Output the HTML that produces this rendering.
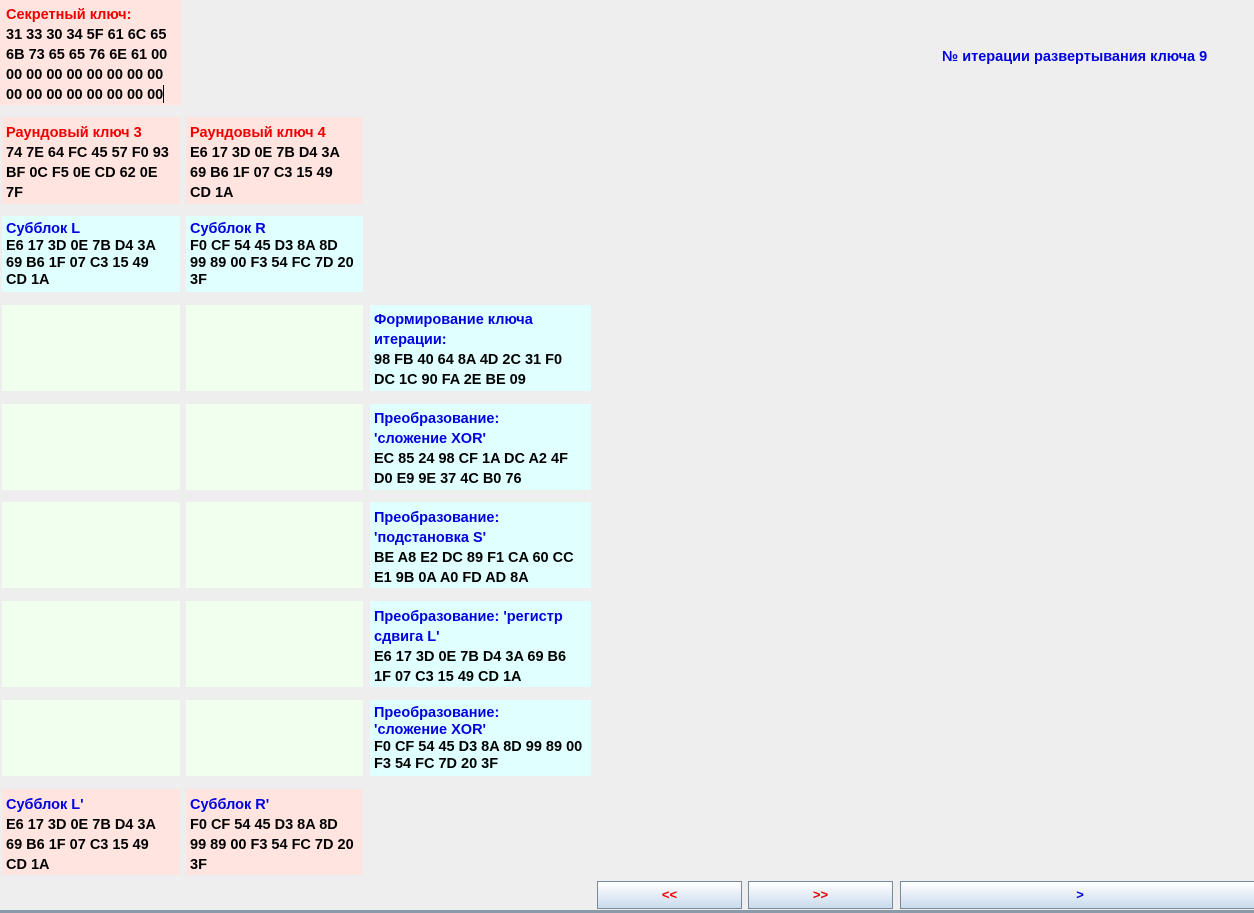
<!DOCTYPE html>
<html><head><meta charset="utf-8"><style>
body{margin:0;width:1254px;height:913px;background:#eeeeee;position:relative;overflow:hidden;font-family:"Liberation Sans",Arial,sans-serif;font-weight:bold;font-size:14.5px;color:#000}
.p{position:absolute;box-sizing:border-box;padding:6px 0 0 5px;white-space:nowrap}
.pk{background:#ffe4e0}.cy{background:#e0ffff}.gr{background:#f0ffee}
.r{color:#f00000}.b{color:#0000e0}
.l20{line-height:20px}.l17{line-height:17px}
.btn{position:absolute;top:881px;height:28px;box-sizing:border-box;border:1px solid #7a8a99;background:linear-gradient(#ffffff,#c9dbed);text-align:center;line-height:26px;font-size:13px}
</style></head><body>
<div class="p pk l20" style="left:0;top:0;width:181px;height:105px;padding-top:5px;padding-left:6px"><span class="r">Секретный ключ:</span><br>31 33 30 34 5F 61 6C 65<br>6B 73 65 65 76 6E 61 00<br>00 00 00 00 00 00 00 00<br>00 00 00 00 00 00 00 00<span style="display:inline-block;width:1px;height:18px;background:#000;vertical-align:-4px"></span></div>
<div class="p b" style="left:937px;top:43px;line-height:16px">№ итерации развертывания ключа 9</div>

<div class="p pk l20" style="left:2px;top:117px;width:178px;height:87px;padding-top:6px;padding-left:4px"><span class="r">Раундовый ключ 3</span><br>74 7E 64 FC 45 57 F0 93<br>BF 0C F5 0E CD 62 0E<br>7F</div>
<div class="p pk l20" style="left:186px;top:117px;width:177px;height:87px;padding-top:6px;padding-left:4px"><span class="r">Раундовый ключ 4</span><br>E6 17 3D 0E 7B D4 3A<br>69 B6 1F 07 C3 15 49<br>CD 1A</div>

<div class="p cy l17" style="left:2px;top:216px;width:178px;height:76px;padding-top:5px;padding-left:4px"><span class="b">Субблок L</span><br>E6 17 3D 0E 7B D4 3A<br>69 B6 1F 07 C3 15 49<br>CD 1A</div>
<div class="p cy l17" style="left:186px;top:216px;width:177px;height:76px;padding-top:5px;padding-left:4px"><span class="b">Субблок R</span><br>F0 CF 54 45 D3 8A 8D<br>99 89 00 F3 54 FC 7D 20<br>3F</div>

<div class="p gr" style="left:2px;top:305px;width:178px;height:86px"></div>
<div class="p gr" style="left:186px;top:305px;width:177px;height:86px"></div>
<div class="p cy l20" style="left:370px;top:305px;width:221px;height:86px;padding-top:5px;padding-left:4px"><span class="b">Формирование ключа<br>итерации:</span><br>98 FB 40 64 8A 4D 2C 31 F0<br>DC 1C 90 FA 2E BE 09</div>

<div class="p gr" style="left:2px;top:404px;width:178px;height:86px"></div>
<div class="p gr" style="left:186px;top:404px;width:177px;height:86px"></div>
<div class="p cy l20" style="left:370px;top:404px;width:221px;height:86px;padding-top:5px;padding-left:4px"><span class="b">Преобразование:<br>'сложение XOR'</span><br>EC 85 24 98 CF 1A DC A2 4F<br>D0 E9 9E 37 4C B0 76</div>

<div class="p gr" style="left:2px;top:502px;width:178px;height:86px"></div>
<div class="p gr" style="left:186px;top:502px;width:177px;height:86px"></div>
<div class="p cy l20" style="left:370px;top:502px;width:221px;height:86px;padding-top:6px;padding-left:4px"><span class="b">Преобразование:<br>'подстановка S'</span><br>BE A8 E2 DC 89 F1 CA 60 CC<br>E1 9B 0A A0 FD AD 8A</div>

<div class="p gr" style="left:2px;top:601px;width:178px;height:86px"></div>
<div class="p gr" style="left:186px;top:601px;width:177px;height:86px"></div>
<div class="p cy l20" style="left:370px;top:601px;width:221px;height:86px;padding-top:6px;padding-left:4px"><span class="b">Преобразование: 'регистр<br>сдвига L'</span><br>E6 17 3D 0E 7B D4 3A 69 B6<br>1F 07 C3 15 49 CD 1A</div>

<div class="p gr" style="left:2px;top:700px;width:178px;height:76px"></div>
<div class="p gr" style="left:186px;top:700px;width:177px;height:76px"></div>
<div class="p cy l17" style="left:370px;top:700px;width:221px;height:76px;padding-top:5px;padding-left:4px"><span class="b">Преобразование:<br>'сложение XOR'</span><br>F0 CF 54 45 D3 8A 8D 99 89 00<br>F3 54 FC 7D 20 3F</div>

<div class="p pk l20" style="left:2px;top:789px;width:178px;height:86px;padding-top:6px;padding-left:4px"><span class="b">Субблок L'</span><br>E6 17 3D 0E 7B D4 3A<br>69 B6 1F 07 C3 15 49<br>CD 1A</div>
<div class="p pk l20" style="left:186px;top:789px;width:177px;height:86px;padding-top:6px;padding-left:4px"><span class="b">Субблок R'</span><br>F0 CF 54 45 D3 8A 8D<br>99 89 00 F3 54 FC 7D 20<br>3F</div>

<div class="btn r" style="left:597px;width:145px">&lt;&lt;</div>
<div class="btn r" style="left:748px;width:145px">&gt;&gt;</div>
<div class="btn b" style="left:900px;width:360px">&gt;</div>
<div style="position:absolute;left:0;top:910px;width:1254px;height:3px;background:#8a9aa8"></div>
</body></html>
